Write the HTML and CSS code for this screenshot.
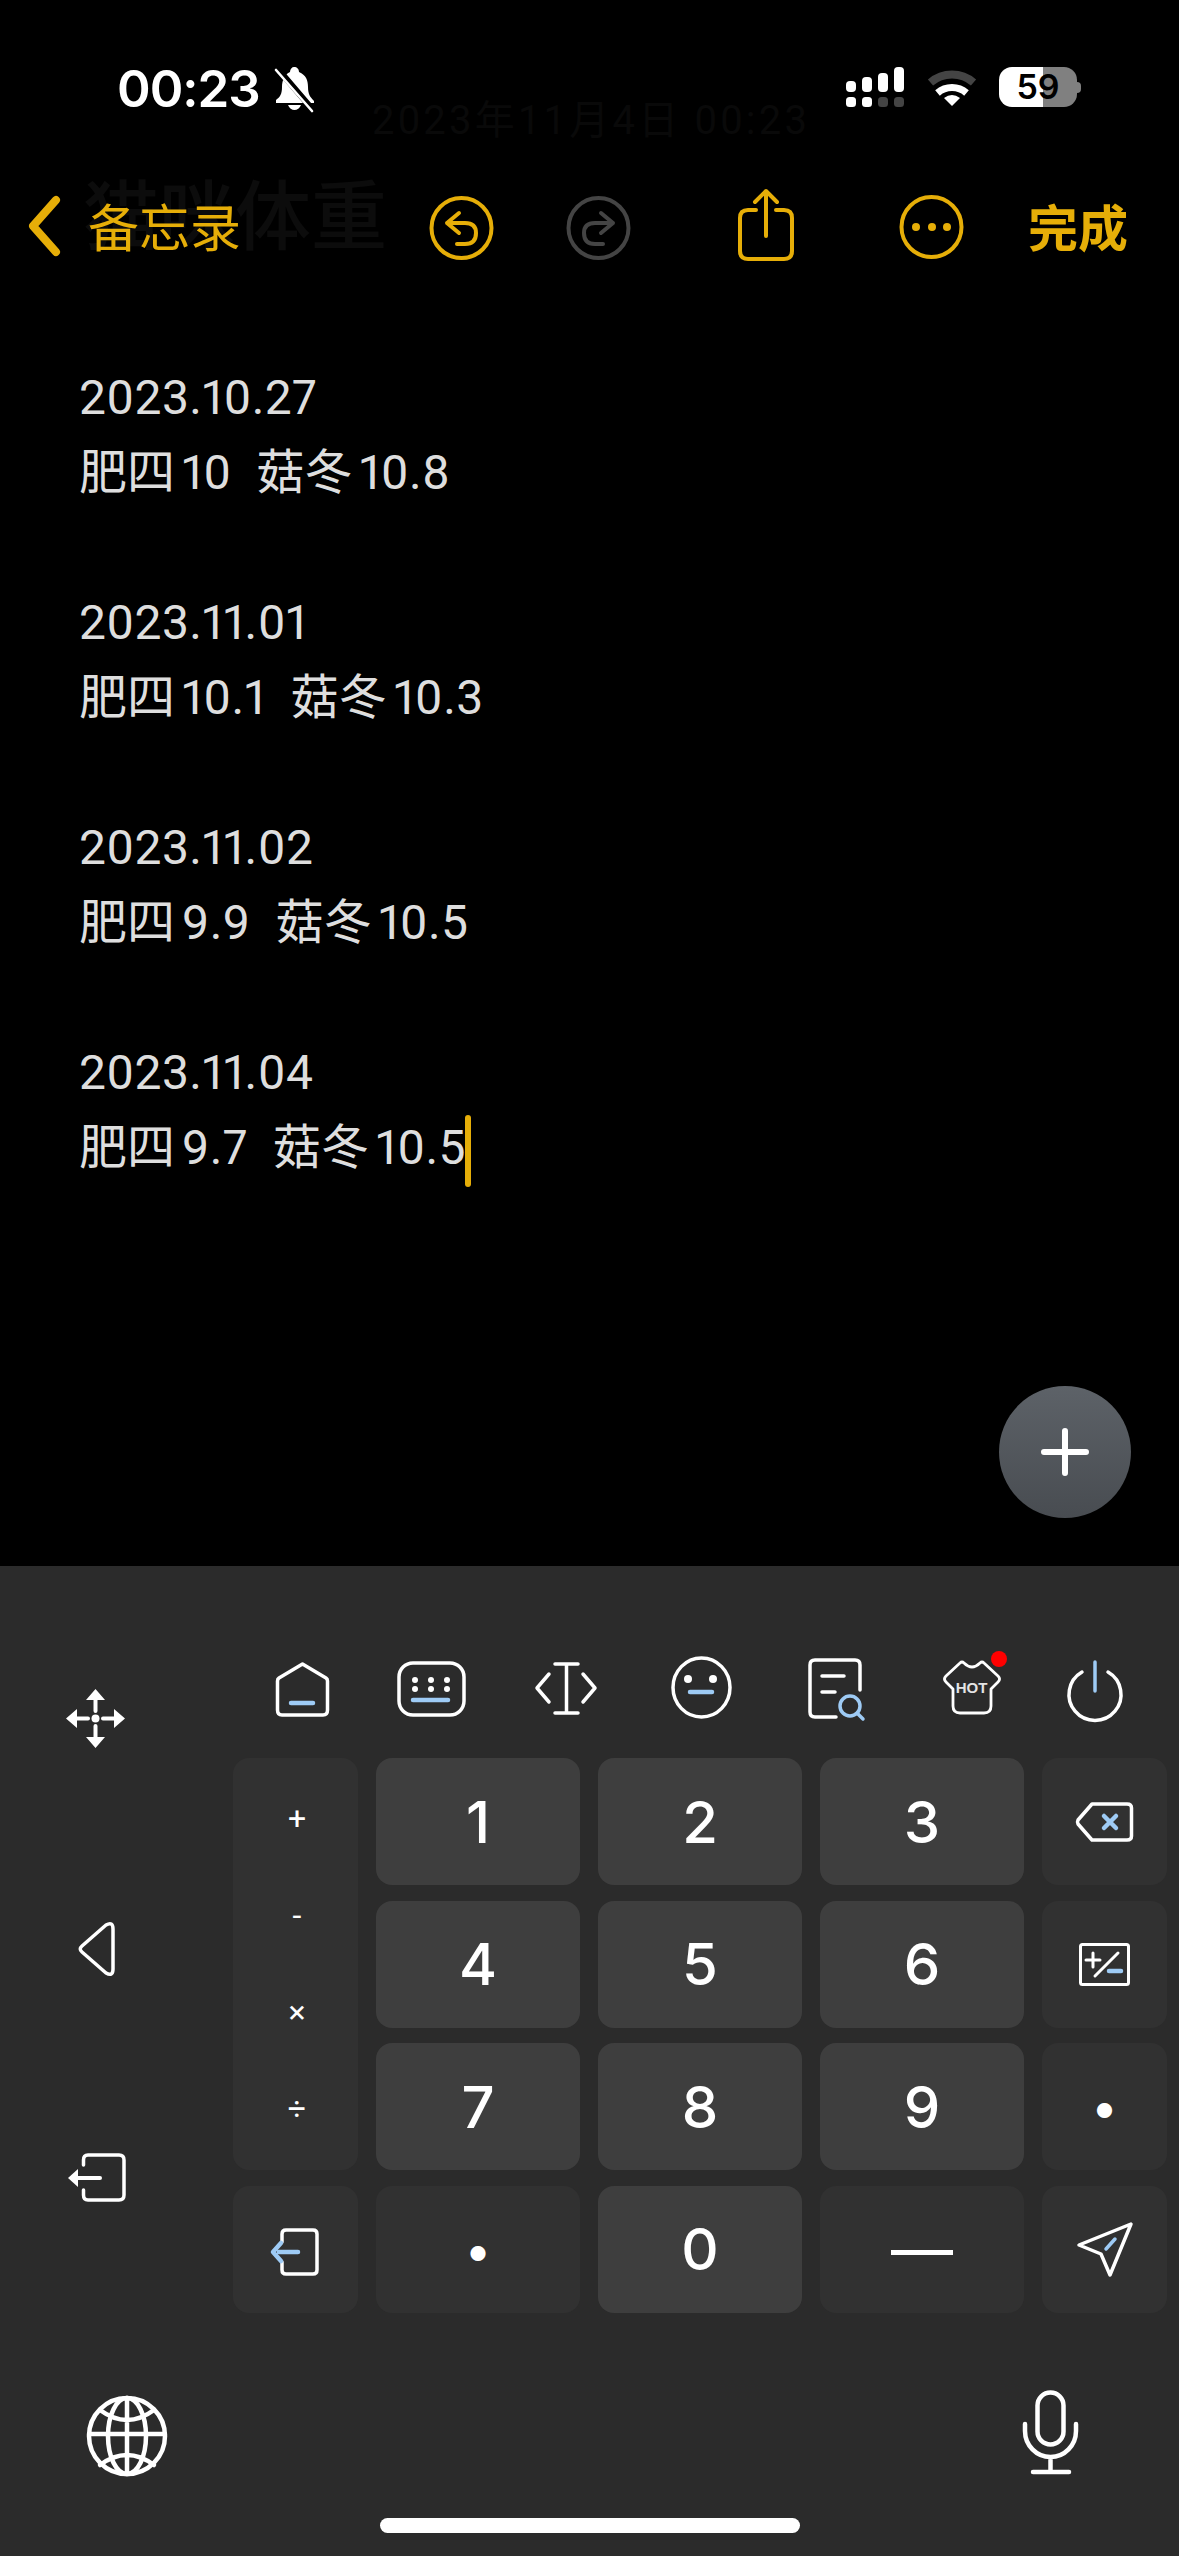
FILE: index.html
```html
<!DOCTYPE html>
<html lang="zh-CN">
<head>
<meta charset="utf-8">
<title>备忘录</title>
<link rel="stylesheet" href="styles.css">
</head>
<body>
<div class="page">
  <div class="ghost-date">2023年11月4日 00:23</div>
  <div class="ghost-title">猫咪体重</div>

  <header class="status">
    <span class="time">00:23</span>
    <svg class="bell" width="40" height="43" viewBox="0 0 40 43">
      <path class="w-fill" d="M19 0C22 0 24 2 24 5C31 8 33 13 33 20C33 27 35 30 39 34V36H1V33C5 30 7 27 7 20C7 13 10 7 15 5C15 2 17 0 19 0Z"/>
      <path class="w-fill" d="M13 38H26C25 41 22 43 19.500 43C17 43 14 41 13 38Z"/>
      <path class="bell-gap" d="M3 2L38 43"/>
      <path class="bell-line" d="M1 3L37 44"/>
    </svg>
    <svg class="signal" width="58" height="40" viewBox="0 0 58 40">
      <rect class="w-fill" x="0" y="14" width="10" height="11" rx="4"/>
      <rect class="w-fill" x="16" y="10" width="10" height="15" rx="4"/>
      <rect class="w-fill" x="32" y="6" width="10" height="19" rx="4"/>
      <rect class="w-fill" x="48" y="0" width="10" height="25" rx="4"/>
      <rect class="w-fill" x="0" y="30" width="10" height="10" rx="3.500"/>
      <rect class="w-fill" x="16" y="30" width="10" height="10" rx="3.500"/>
      <rect class="dim-fill" x="32" y="30" width="10" height="10" rx="3.500"/>
      <rect class="dim-fill" x="48" y="30" width="10" height="10" rx="3.500"/>
    </svg>
    <svg class="wifi" width="50" height="37" viewBox="0 0 50 37">
      <path class="wifi-outer" d="M3.500 13.500A33 33 0 0 1 46.500 13.500"/>
      <path class="wifi-mid" d="M10.500 24A22 22 0 0 1 39.500 24"/>
      <path class="w-fill" d="M25 37L17 29Q25 23 33 29Z"/>
    </svg>
    <div class="battery"><span class="battery-body">59</span><span class="battery-nub"></span></div>
  </header>

  <nav class="nav">
    <svg width="32" height="60" viewBox="0 0 32 60"><path class="y-bold" d="M28 5L5 31L28 57"/></svg>
    <span class="nav-back">备忘录</span>
    <svg width="65" height="72" viewBox="0 0 65 72">
      <circle class="y-line" cx="32.500" cy="39" r="30"/>
      <path class="y-line" d="M30 24L18 34L30 44M18 34H36Q47 34 47 44Q47 55 36 55H28"/>
    </svg>
    <svg width="65" height="72" viewBox="0 0 65 72">
      <circle class="d-line" cx="32.500" cy="39" r="30"/>
      <path class="d-line" d="M35 24L47 34L35 44M47 34H29Q18 34 18 44Q18 55 29 55H37"/>
    </svg>
    <svg width="56" height="72" viewBox="0 0 56 72">
      <path class="y-line" d="M18 21H10Q2 21 2 29V62Q2 70 10 70H46Q54 70 54 62V29Q54 21 46 21H38"/>
      <path class="y-line" d="M28 47V2M17 13L28 2L39 13"/>
    </svg>
    <svg width="65" height="72" viewBox="0 0 65 72">
      <circle class="y-line" cx="32.500" cy="38" r="30"/>
      <circle class="y-fill" cx="17" cy="38" r="4"/>
      <circle class="y-fill" cx="33" cy="38" r="4"/>
      <circle class="y-fill" cx="48" cy="38" r="4"/>
    </svg>
    <span class="nav-done">完成</span>
  </nav>

  <main class="note">
    <p>2023.10.27<br><span class="cjk">肥四</span>10<span class="sp"></span><span class="cjk">菇冬</span>10.8</p>
    <p>2023.11.01<br><span class="cjk">肥四</span>10.1<span class="sp"></span><span class="cjk">菇冬</span>10.3</p>
    <p>2023.11.02<br><span class="cjk">肥四</span>9.9<span class="sp"></span><span class="cjk">菇冬</span>10.5</p>
    <p>2023.11.04<br><span class="cjk">肥四</span>9.7<span class="sp"></span><span class="cjk">菇冬</span>10.5<span class="caret"></span></p>
    <button class="fab" type="button" aria-label="添加">
      <svg width="48" height="48" viewBox="0 0 48 48"><path class="fab-plus" d="M3 24H45M24 3V45"/></svg>
    </button>
  </main>

  <section class="kb">
    <div class="kb-body">
      <aside class="side">
        <svg class="side-move" width="59" height="59" viewBox="0 0 59 59">
          <path class="w-fill" d="M29.500 0L39 11H20ZM29.500 59L20 48H39ZM0 29.500L11 20V39ZM59 29.500L48 39V20Z"/>
          <circle class="w-fill" cx="29.500" cy="29.500" r="4"/>
          <path class="w-thick" d="M29.500 10V22M29.500 37V49M10 29.500H22M37 29.500H49"/>
        </svg>
        <svg class="side-tri" width="37" height="54" viewBox="0 0 37 54">
          <path class="w-line" d="M28 3L4 24Q0.500 27 4 30L28 51Q35 55 35 47V7Q35 -1 28 3Z"/>
        </svg>
        <svg class="side-exit" width="58" height="49" viewBox="0 0 58 49">
          <path class="w-line" d="M15.500 12V7Q15.500 2 20 2H51Q56 2 56 7V42Q56 47 51 47H20Q15.500 47 15.500 42V37"/>
          <path class="w-fill" d="M0 25L10 16V34Z"/>
          <path class="w-thick" d="M8 25H32"/>
        </svg>
      </aside>
      <div class="kb-main">
        <div class="tools">
          <svg width="53" height="66" viewBox="0 0 53 66">
            <path class="w-line" d="M26.500 8L50 22Q51.500 23 51.500 25V54Q51.500 59 47 59H6Q1.500 59 1.500 54V25Q1.500 23 3 22Z"/>
            <path class="b-line" d="M15 47H37"/>
          </svg>
          <svg width="69" height="66" viewBox="0 0 69 66">
            <rect class="w-line" x="2" y="7" width="65" height="52" rx="14"/>
            <g class="w-fill"><circle cx="18" cy="24" r="3"/><circle cx="34" cy="24" r="3"/><circle cx="50" cy="24" r="3"/><circle cx="18" cy="33" r="3"/><circle cx="34" cy="33" r="3"/><circle cx="50" cy="33" r="3"/></g>
            <path class="b-line" d="M16 44H51"/>
          </svg>
          <svg width="62" height="66" viewBox="0 0 62 66">
            <path class="w-line" d="M20 8H43M31.500 8V57M20 57H43M14 18L2 32L14 46M48 18L60 32L48 46"/>
          </svg>
          <svg width="61" height="66" viewBox="0 0 61 66">
            <ellipse class="w-line" cx="30.500" cy="31.500" rx="28.500" ry="29.500"/>
            <circle class="w-fill" cx="17" cy="23" r="4"/>
            <circle class="w-fill" cx="42" cy="23" r="4"/>
            <path class="b-line" d="M19 36H41"/>
          </svg>
          <svg width="57" height="66" viewBox="0 0 57 66">
            <path class="w-line" d="M52 34V9Q52 4 47 4H7Q2 4 2 9V56Q2 61 7 61H28M14 20H36M14 36H27"/>
            <circle class="b-thin" cx="42" cy="50" r="10"/>
            <path class="b-thin" d="M49 57L55 63"/>
          </svg>
          <div class="shirt">
            <svg width="57" height="66" viewBox="0 0 57 66">
              <path class="w-thin" d="M17 7Q19 5 21 7Q29 15 37 7Q39 5 41 7L55 20Q58 23 55 26L48 33V50Q48 57 41 57H17Q10 57 10 50V33L3 26Q0 23 3 20Z"/>
              <text class="hot" x="28.500" y="37">HOT</text>
            </svg>
            <span class="red-dot"></span>
          </div>
          <svg width="55" height="66" viewBox="0 0 55 66">
            <path class="w-line" d="M14 16A26 26 0 1 0 40 16"/>
            <path class="b-thin" d="M27 6V35"/>
          </svg>
        </div>
        <div class="keys">
          <div class="key fn ops"><span>+</span><span>-</span><span>×</span><span>÷</span></div>
          <div class="key num">1</div>
          <div class="key num">2</div>
          <div class="key num">3</div>
          <div class="key fn">
            <svg width="57" height="40" viewBox="0 0 57 40">
              <path class="w-line" d="M16 2H51Q55.500 2 55.500 6V34Q55.500 38 51 38H16L2 22Q1 20 2 18Z"/>
              <path class="b-line" d="M28 14L40 26M40 14L28 26"/>
            </svg>
          </div>
          <div class="key num">4</div>
          <div class="key num">5</div>
          <div class="key num">6</div>
          <div class="key fn">
            <svg width="51" height="43" viewBox="0 0 51 43">
              <rect class="w-sharp" x="1.500" y="1.500" width="48" height="40" rx="2"/>
              <path class="w-sharp" d="M7 17H21M14 10V24M39 10L16 33"/>
              <path class="b-line" d="M30 28H42"/>
            </svg>
          </div>
          <div class="key num">7</div>
          <div class="key num">8</div>
          <div class="key num">9</div>
          <div class="key fn sym">•</div>
          <div class="key fn">
            <svg width="50" height="53" viewBox="0 0 50 53">
              <path class="w-line" d="M11 19V11Q11 7 15 7H42Q46 7 46 11V47Q46 51 42 51H15Q11 51 11 47V39"/>
              <path class="b-line" d="M10 20L2 29L10 38M8 29H27"/>
            </svg>
          </div>
          <div class="key fn sym">•</div>
          <div class="key num">0</div>
          <div class="key fn dash">—</div>
          <div class="key fn">
            <svg width="56" height="55" viewBox="0 0 56 55">
              <path class="w-line" d="M54 2L2 23L24 32L33 53Z"/>
              <path class="b-thin" d="M29 27L38 17"/>
            </svg>
          </div>
        </div>
      </div>
    </div>
    <footer class="kb-foot">
      <div class="foot-row">
        <svg class="globe" width="80" height="80" viewBox="0 0 80 80">
          <ellipse class="w-bold" cx="40" cy="40" rx="38" ry="38"/>
          <ellipse class="w-bold" cx="40" cy="40" rx="19" ry="38"/>
          <path class="w-bold" d="M40 2V78M2 38H78M13 14Q40 34 67 14M13 69Q40 49 67 69"/>
        </svg>
        <svg class="mic" width="55" height="84" viewBox="0 0 55 84">
          <rect class="w-bold" x="14.500" y="1.500" width="26" height="52" rx="13"/>
          <path class="w-bold" d="M2 33V40A25.500 26 0 0 0 53 40V33M27.500 66V80"/>
          <path class="w-bold" d="M10 81H46"/>
        </svg>
      </div>
      <div class="home-bar"></div>
    </footer>
  </section>
</div>
</body>
</html>
```

FILE: styles.css
```css
* { box-sizing: border-box; }
html, body { margin: 0; padding: 0; background: #000; }
.page {
  position: relative;
  width: 1179px;
  height: 2556px;
  overflow: hidden;
  display: flex;
  flex-direction: column;
  background: #000;
  font-family: Roboto, "Noto Sans CJK SC", sans-serif;
}
svg { display: block; overflow: visible; flex: none; }

.w-fill { fill: #fff; }
.dim-fill { fill: #444; }
.y-fill { fill: #e6ae08; }
.w-line, .w-thick, .w-thin, .w-sharp, .w-bold, .b-line, .b-thin, .y-line, .y-bold, .d-line, .fab-plus, .bell-line, .bell-gap, .wifi-outer, .wifi-mid {
  fill: none;
  stroke-linecap: round;
  stroke-linejoin: round;
}
.w-line { stroke: #fff; stroke-width: 3.5; }
.w-bold { stroke: #fff; stroke-width: 4.5; }
.w-thick { stroke: #fff; stroke-width: 4; }
.w-thin { stroke: #fff; stroke-width: 2.8; }
.w-sharp { stroke: #fff; stroke-width: 3; }
.b-line { stroke: #9ecbf5; stroke-width: 4.5; }
.b-thin { stroke: #9ecbf5; stroke-width: 3.5; }
.y-line { stroke: #e6ae08; stroke-width: 4; }
.y-bold { stroke: #e6ae08; stroke-width: 8; }
.d-line { stroke: #444; stroke-width: 4; }
.fab-plus { stroke: #fff; stroke-width: 6; }
.bell-gap { stroke: #000; stroke-width: 6; }
.bell-line { stroke: #fff; stroke-width: 2.6; }
.wifi-outer { stroke: #444; stroke-width: 8; stroke-linecap: butt; }
.wifi-mid { stroke: #fff; stroke-width: 7; stroke-linecap: butt; }

.ghost-date {
  position: absolute;
  left: 372px;
  top: 97px;
  font-size: 40px;
  line-height: 48px;
  letter-spacing: 3.2px;
  color: #090909;
  white-space: nowrap;
}
.ghost-title {
  position: absolute;
  left: 83px;
  top: 173px;
  font-size: 76px;
  line-height: 90px;
  font-weight: 500;
  color: #0c0c0c;
  white-space: nowrap;
}

.status {
  position: relative;
  display: flex;
  align-items: flex-start;
  height: 43px;
  margin-top: 67px;
  padding: 0 98px 0 117px;
}
.time {
  font-family: Inter, sans-serif;
  font-size: 51px;
  font-weight: 600;
  line-height: 43px;
  color: #fff;
  letter-spacing: -1px;
}
.bell { margin-left: 15px; }
.signal { margin-left: auto; }
.wifi { margin-left: 23px; margin-top: 2px; }
.battery { display: flex; align-items: center; margin-left: 22px; height: 40px; }
.battery-body {
  width: 78px;
  height: 40px;
  border-radius: 13px;
  background: linear-gradient(90deg, #fff 56%, #808080 56%);
  color: #000;
  font-family: Inter, sans-serif;
  font-size: 34px;
  font-weight: 600;
  line-height: 40px;
  text-align: center;
}
.battery-nub {
  width: 4px;
  height: 11px;
  background: #808080;
  border-radius: 0 6px 6px 0;
}

.nav {
  position: relative;
  display: grid;
  grid-template-columns: 60px 341px 137px 172px 161px 129px auto;
  align-items: center;
  height: 72px;
  margin-top: 79px;
  padding-left: 28px;
}
.nav-back {
  font-size: 51px;
  line-height: 72px;
  color: #e6ae08;
  font-family: "Noto Sans CJK SC", sans-serif;
}
.nav-done {
  font-size: 50px;
  line-height: 72px;
  font-weight: 700;
  color: #e6ae08;
  font-family: "Noto Sans CJK SC", sans-serif;
}

.note {
  position: relative;
  flex: 1;
  padding: 99px 0 0 79px;
  font-size: 48px;
  line-height: 75px;
  color: #dedede;
  letter-spacing: 0.35px;
  font-variant-numeric: proportional-nums;
}
.note p { margin: 0 0 75px; white-space: nowrap; }
.cjk {
  font-family: "Noto Sans CJK SC", sans-serif;
  font-weight: 400;
  line-height: 1;
  letter-spacing: 0;
  margin-right: 7px;
}
.sp { display: inline-block; width: 25px; }
.caret {
  display: inline-block;
  width: 6px;
  height: 72px;
  margin-left: -1px;
  margin-bottom: -23px;
  background: #e6ae08;
  border-radius: 3px;
}
.fab {
  position: absolute;
  right: 48px;
  bottom: 48px;
  width: 132px;
  height: 132px;
  padding: 0;
  border: 0;
  border-radius: 50%;
  background: linear-gradient(180deg, #5d6268, #484c51);
  display: flex;
  align-items: center;
  justify-content: center;
}

.kb {
  height: 990px;
  background: #2b2b2b;
  display: flex;
  flex-direction: column;
}
.kb-body { display: flex; }
.side {
  width: 233px;
  flex: none;
  display: flex;
  flex-direction: column;
  padding-top: 123px;
}
.side-move { margin-left: 66px; }
.side-tri { margin: 174px 0 0 78px; }
.side-exit { margin: 177px 0 0 68px; }
.kb-main { width: 934px; padding-top: 90px; }
.tools {
  display: grid;
  grid-template-columns: 121px 138px 136px 137px 135px 125px 55px;
  height: 66px;
  margin: 0 0 36px 43px;
}
.shirt { position: relative; width: 57px; height: 66px; }
.hot {
  font-family: "Liberation Sans", sans-serif;
  font-size: 15px;
  font-weight: 700;
  fill: #e4e4e4;
  text-anchor: middle;
}
.red-dot {
  position: absolute;
  left: 48px;
  top: -5px;
  width: 16px;
  height: 16px;
  border-radius: 50%;
  background: #f00;
}

.keys {
  display: grid;
  grid-template-columns: 125px 204px 204px 204px 125px;
  grid-template-rows: repeat(4, 127px);
  gap: 15.67px 18px;
}
.key {
  display: flex;
  align-items: center;
  justify-content: center;
  border-radius: 16px;
  color: #fff;
}
.num {
  background: #3e3e3e;
  font-family: Inter, sans-serif;
  font-size: 58px;
  font-weight: 500;
}
.fn { background: #313131; }
.ops {
  grid-row: span 3;
  flex-direction: column;
  justify-content: flex-start;
  padding-top: 12px;
  font-family: Roboto, sans-serif;
  font-size: 32px;
  font-weight: 400;
}
.ops span { height: 97px; line-height: 97px; margin-left: 3px; }
.sym { font-family: Inter, sans-serif; font-size: 48px; }
.dash { font-family: Inter, sans-serif; font-size: 62px; font-weight: 400; }

.kb-foot { padding-top: 78px; }
.foot-row {
  display: flex;
  justify-content: space-between;
  align-items: flex-start;
  padding: 0 101px 0 87px;
}
.globe { margin-top: 5px; }
.home-bar {
  width: 420px;
  height: 15px;
  margin: 42px 0 0 380px;
  background: #fff;
  border-radius: 8px;
}
```
